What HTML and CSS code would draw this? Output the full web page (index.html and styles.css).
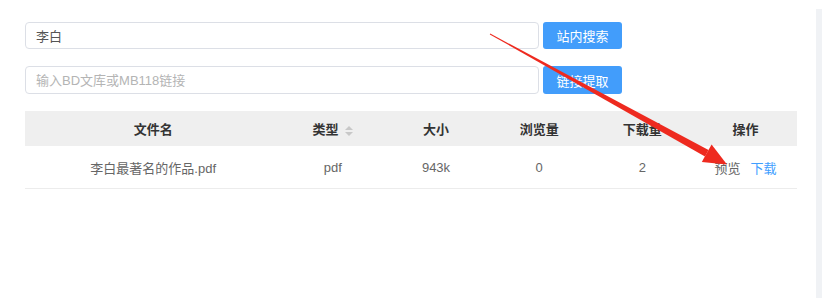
FILE: index.html
```html
<!DOCTYPE html>
<html>
<head>
    <meta charset="utf-8">
    <title>文库搜索</title>
    <link rel="stylesheet" href="styles.css">
</head>
<body>
    <div class="page">
        <div class="main">
            <div class="search-row">
                <input class="field" type="text" value="李白">
                <button class="btn">站内搜索</button>
            </div>
            <div class="search-row">
                <input class="field" type="text" placeholder="输入BD文库或MB118链接">
                <button class="btn">链接提取</button>
            </div>

            <table class="files">
                <thead>
                    <tr>
                        <th class="col-name">文件名</th>
                        <th>类型 <span class="sort"><i class="up"></i><i class="down"></i></span></th>
                        <th>大小</th>
                        <th>浏览量</th>
                        <th>下载量</th>
                        <th>操作</th>
                    </tr>
                </thead>
                <tbody>
                    <tr>
                        <td>李白最著名的作品.pdf</td>
                        <td>pdf</td>
                        <td>943k</td>
                        <td>0</td>
                        <td>2</td>
                        <td><a class="op">预览</a><a class="op link">下载</a></td>
                    </tr>
                </tbody>
            </table>
        </div>
        <div class="side-edge"></div>
    </div>

    <!-- annotation arrow drawn over the screenshot -->
    <svg class="mark" width="822" height="298" viewBox="0 0 822 298">
        <polygon points="490.2,33.6 708.5,150.1 705,156.6 489.8,34.4" fill="#ee2a1f"/>
        <polygon points="727,164.5 701.8,162 711.6,144.6" fill="#ee2a1f"/>
    </svg>
</body>
</html>
```

FILE: styles.css
```css
body {
    margin: 0;
    background: #fff;
    font-family: "Liberation Sans", "Noto Sans CJK SC", sans-serif;
    font-size: 13px;
    color: #606266;
}
.page {
    display: flex;
    width: 822px;
    height: 298px;
}
.main {
    width: 772px;
    padding: 22px 19px 0 25px;
}
.side-edge {
    width: 6px;
    margin-top: 9px;
    background: #f0f2f5;
}
.search-row {
    display: flex;
    gap: 4px;
    margin-bottom: 17px;
}
.field {
    box-sizing: border-box;
    width: 514px;
    height: 27px;
    padding: 0 10px;
    border: 1px solid #dcdfe6;
    border-radius: 4px;
    font: inherit;
    color: #555;
    outline: none;
}
.search-row:nth-child(2) .field {
    height: 28px;
}
.field::placeholder {
    color: #b4b4b4;
}
.btn {
    width: 79px;
    height: 27px;
    border: none;
    border-radius: 3px;
    background: #429dfb;
    color: #fff;
    font: inherit;
    padding: 0;
}
.search-row:nth-child(2) .btn {
    height: 28px;
}
.files {
    width: 772px;
    border-collapse: collapse;
    table-layout: fixed;
}
.files th {
    height: 35px;
    padding: 0;
    background: #efefef;
    color: #333;
    font-weight: bold;
    width: 103px;
}
.files th.col-name {
    width: 256px;
}
.files td {
    height: 42px;
    padding: 0;
    text-align: center;
    color: #666;
    border-bottom: 1px solid #ececec;
}
.sort {
    display: inline-flex;
    flex-direction: column;
    gap: 2px;
    vertical-align: middle;
    margin-left: 3px;
}
.sort i {
    width: 0;
    height: 0;
    border-left: 4px solid transparent;
    border-right: 4px solid transparent;
}
.sort .up {
    border-bottom: 4px solid #c8c8c8;
}
.sort .down {
    border-top: 4px solid #c8c8c8;
}
.op {
    color: #666;
    margin: 0 5px;
}
.op.link {
    color: #409eff;
}
.mark {
    position: absolute;
    left: 0;
    top: 0;
    pointer-events: none;
}
```
